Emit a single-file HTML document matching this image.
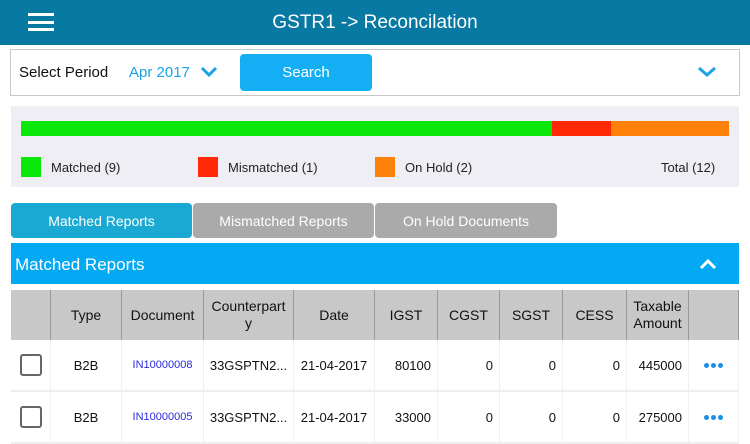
<!DOCTYPE html><html><head><style>
*{margin:0;padding:0;box-sizing:border-box}
body{width:750px;height:422px;overflow:hidden;background:#fff;font-family:"Liberation Sans",Arial,sans-serif;position:relative}
.a{position:absolute}
.c{position:absolute;display:flex;align-items:center;justify-content:center;text-align:center}
.r{justify-content:flex-end;padding-right:6px}
.d{display:inline-block;width:5px;height:5px;border-radius:50%;background:#1a8fe6;margin:0 1px}
</style></head><body>
<div class="a" style="left:0;top:0;width:750px;height:45px;background:#0879a3"></div>
<div class="a" style="left:28px;top:13px;width:26px;height:3px;background:#fff"></div>
<div class="a" style="left:28px;top:21px;width:26px;height:3px;background:#fff"></div>
<div class="a" style="left:28px;top:28px;width:26px;height:3px;background:#fff"></div>
<div class="c" style="left:0;top:0;width:750px;height:45px;color:#fff;font-size:19px">GSTR1 -&gt; Reconcilation</div>
<div class="a" style="left:10px;top:49px;width:730px;height:47px;border:1px solid #c8c8c8"></div>
<div class="a" style="left:19px;top:64px;font-size:15px;color:#111">Select Period</div>
<div class="a" style="left:129px;top:64px;font-size:15px;color:#1aa3e6">Apr 2017</div>
<svg class="a" style="left:200px;top:66px" width="18" height="12"><path d="M2 2l7 7 7-7" stroke="#1aa3e6" stroke-width="3" fill="none"/></svg>
<div class="c" style="left:240px;top:54px;width:132px;height:37px;background:#14aef5;border-radius:4px;color:#fff;font-size:15px">Search</div>
<svg class="a" style="left:697px;top:66px" width="20" height="12"><path d="M2 2l8 7 8-7" stroke="#1aa3e6" stroke-width="3" fill="none"/></svg>
<div class="a" style="left:11px;top:106px;width:728px;height:81px;background:#efeef4"></div>
<div class="a" style="left:21px;top:121px;width:531px;height:15px;background:#0be60b"></div>
<div class="a" style="left:552px;top:121px;width:59px;height:15px;background:#ff2a05"></div>
<div class="a" style="left:611px;top:121px;width:118px;height:15px;background:#ff8009"></div>
<div class="a" style="left:21px;top:157px;width:20px;height:20px;background:#0be60b"></div>
<div class="a" style="left:198px;top:157px;width:20px;height:20px;background:#ff2a05"></div>
<div class="a" style="left:375px;top:157px;width:20px;height:20px;background:#ff8009"></div>
<div class="a" style="left:51px;top:160px;font-size:13px;color:#222">Matched (9)</div>
<div class="a" style="left:228px;top:160px;font-size:13px;color:#222">Mismatched (1)</div>
<div class="a" style="left:405px;top:160px;font-size:13px;color:#222">On Hold (2)</div>
<div class="a" style="left:661px;top:160px;font-size:13px;color:#222">Total (12)</div>
<div class="c" style="left:11px;top:203px;width:181px;height:35px;background:#1aa9d2;border-radius:4px;color:#fff;font-size:14px">Matched Reports</div>
<div class="c" style="left:193px;top:203px;width:181px;height:35px;background:#aaa;border-radius:4px;color:#fff;font-size:14px">Mismatched Reports</div>
<div class="c" style="left:375px;top:203px;width:182px;height:35px;background:#aaa;border-radius:4px;color:#fff;font-size:14px">On Hold Documents</div>
<div class="a" style="left:11px;top:243px;width:728px;height:41px;background:#04a9f4"></div>
<div class="a" style="left:15px;top:255px;font-size:17px;color:#fff">Matched Reports</div>
<svg class="a" style="left:699px;top:258px" width="18" height="12"><path d="M2 10l7-7 7 7" stroke="#fff" stroke-width="3" fill="none"/></svg>
<div class="a" style="left:11px;top:290px;width:728px;height:50px;background:#c8c8c8"></div>
<div id="t"></div>
<script>
var x=[11,51,122,204,294,375,438,500,563,627,689,739];
var h=["","Type","Document","Counterpart<br>y","Date","IGST","CGST","SGST","CESS","Taxable<br>Amount",""];
var rows=[["","B2B","IN10000008","33GSPTN2...","21-04-2017","80100","0","0","0","445000",""],["","B2B","IN10000005","33GSPTN2...","21-04-2017","33000","0","0","0","275000",""]];
var s="";
for(var i=0;i<11;i++){s+='<div class="c" style="left:'+x[i]+'px;top:290px;width:'+(x[i+1]-x[i])+'px;height:50px;border-right:1px solid #999;font-size:14px;color:#111;line-height:17px">'+h[i]+'</div>';}
rows.forEach(function(r,j){var y=340+j*52;
s+='<div class="a" style="left:11px;top:'+(y+50)+'px;width:728px;height:2px;background:#eee"></div>';
for(var i=0;i<11;i++){var st="font-size:13px;color:#111;";var cls="c";
if(i>=5&&i<=9)cls="c r";
if(i==2)st="font-size:11px;color:#2a2adf;";
var t=r[i];if(i==0)t='<div style="width:22px;height:22px;border:2px solid #666;border-radius:3px"></div>';
if(i==10)t='<span class="d"></span><span class="d"></span><span class="d"></span>';
s+='<div class="'+cls+'" style="left:'+x[i]+'px;top:'+y+'px;width:'+(x[i+1]-x[i])+'px;height:50px;border-right:1px solid #f0f0f0;'+st+'">'+t+'</div>';}});
document.getElementById("t").innerHTML=s;
</script>
</body></html>
